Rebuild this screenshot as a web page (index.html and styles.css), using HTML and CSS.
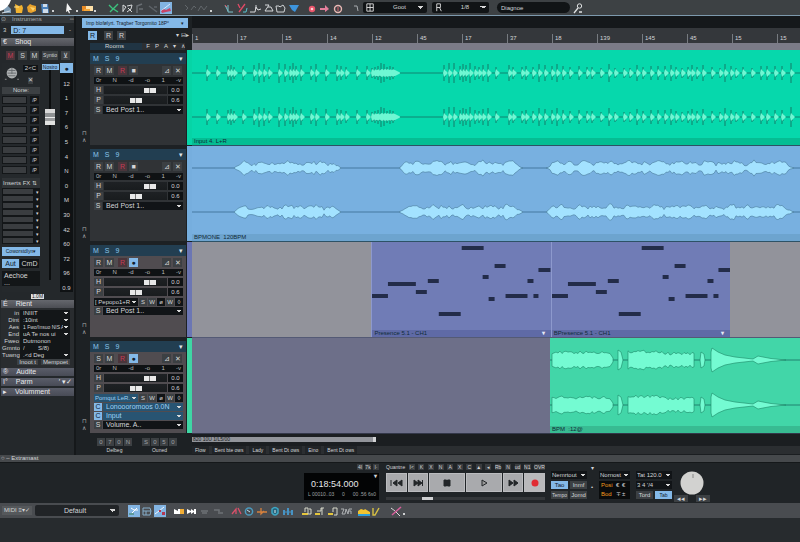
FILE: index.html
```html
<!DOCTYPE html>
<html lang="en">
<head>
<meta charset="utf-8">
<title>Arranger</title>
<link rel="stylesheet" href="styles.css">
</head>
<body>
<svg class="corner" viewBox="0 0 12 12" aria-hidden="true"><path d="M0 0H11Q8 9 0 11Z" fill="#fff"/></svg>

<header class="toolbar top">
  <div class="group">
    <button class="ico" aria-label="Home"><svg viewBox="0 0 12 12"><path d="M4 6l3-3 4 4v4H4z" fill="#7f9cb4"/><path d="M2 11L10 9" stroke="#d5dde4"/></svg></button>
    <button class="ico" aria-label="New"><svg viewBox="0 0 12 12"><path d="M2 2l4 2 3-1 1 3-1 5H3z" fill="#f2b330"/><path d="M1 5h5" stroke="#fbe08b"/></svg></button>
    <button class="ico" aria-label="Open"><svg viewBox="0 0 12 12"><path d="M1 5l3-3 2 1 4 1v5l-5 2-3-1z" fill="#e8a22c"/><path d="M4 5l5 1-2 3z" fill="#ffd56d"/></svg></button>
    <button class="ico" aria-label="Save"><svg viewBox="0 0 12 12"><path d="M2 2h7l1 9H3z" fill="#4c83bd"/><path d="M4 2h4v3H4zM4 7h5v4H4z" fill="#cfdce9"/></svg></button>
    <i class="dot"></i>
  </div>
  <div class="group g-arrow">
    <button class="ico" aria-label="Select"><svg viewBox="0 0 12 12"><path d="M4 1l5 7-3 0 1 3-1 .6L4.800 9 3 10z" fill="#f4f4f4"/></svg></button>
    <i class="dot"></i>
    <button class="ico" aria-label="Erase"><svg viewBox="0 0 12 12"><path d="M1 4h4v5H1z" fill="#e98a24"/><path d="M5 4h7v5H5z" fill="#ffe1a8"/><path d="M3 7h6v2H3z" fill="#f6a83a"/></svg></button>
    <i class="dot"></i>
  </div>
  <div class="group g-edit">
    <button class="ico" aria-label="Split"><svg viewBox="0 0 12 12"><path d="M1 3l3 3 6 4M2 10l8-8" stroke="#3cc27d" stroke-width="1.400" fill="none"/></svg></button>
    <button class="ico" aria-label="Range"><svg viewBox="0 0 12 12"><path d="M2 3v7M2 3l3 2-3 4M6 4l5-1-1 4-4 3M7 6l4 4" stroke="#d8dadb" fill="none"/></svg></button>
    <button class="ico" aria-label="Bend"><svg viewBox="0 0 12 12"><path d="M3 11V4l5-2M5 7h4" stroke="#686d72" stroke-width="1.500" fill="none"/></svg></button>
    <button class="ico" aria-label="Mute"><svg viewBox="0 0 12 12"><path d="M2 4l4 3 4 3M7 5h3" stroke="#5e6368" stroke-width="1.500" fill="none"/></svg></button>
    <button class="ico on" aria-label="Paint"><svg viewBox="0 0 12 12"><path d="M1 9l9-7" stroke="#d7eaff"/><path d="M1 9q3-3 5-1l4-2 1 3-5 1-4 1z" fill="#c84468"/></svg></button>
  </div>
  <div class="group g-dim">
    <button class="ico" aria-label="Undo"><svg viewBox="0 0 12 12"><path d="M1 3l3 3-2 2M7 8l3-4 2 2" stroke="#62676b" fill="none"/></svg></button>
    <button class="ico" aria-label="Redo"><svg viewBox="0 0 12 12"><path d="M1 9l3-5 3 4 3-4" stroke="#62676b" fill="none"/></svg></button>
    <i class="dot"></i>
  </div>
  <div class="group g-tools">
    <button class="ico" aria-label="Tempo"><svg viewBox="0 0 12 12"><path d="M2 3l3 6M5 3v7h5" stroke="#7cc3cc" fill="none"/><path d="M2 3l2 2" stroke="#d45060"/></svg></button>
    <button class="ico" aria-label="Transpose"><svg viewBox="0 0 12 12"><path d="M2 2l2 4M3 10l6-8" stroke="#e04a66" stroke-width="1.300"/><path d="M7 10h3l1-4" stroke="#59c2cf" fill="none"/></svg></button>
    <button class="ico" aria-label="Quantize"><svg viewBox="0 0 12 12"><path d="M1 10h5l1-5 2 3 3-1M7 3v4" stroke="#d6d8da" fill="none"/></svg></button>
    <button class="ico" aria-label="Groove"><svg viewBox="0 0 12 12"><path d="M3 3h4L3 9h8l-2-4h-3" stroke="#d6d8da" fill="none"/></svg></button>
    <button class="ico" aria-label="Folder"><svg viewBox="0 0 12 12"><path d="M1 4h3l1 1 3-2 2 3-1 4H2z" stroke="#cfd2d4" fill="none"/></svg></button>
    <button class="ico" aria-label="Marker"><svg viewBox="0 0 12 12"><path d="M1 3h10L7 10 4 8z" fill="#3d94dc"/></svg></button>
  </div>
  <div class="group g-rec">
    <button class="ico" aria-label="Record mode"><svg viewBox="0 0 12 12"><circle cx="6" cy="7" r="3.200" fill="#e8566c"/><circle cx="6" cy="7" r="1.300" fill="#ffd0d4"/></svg></button>
    <button class="ico" aria-label="Punch"><svg viewBox="0 0 12 12"><path d="M1 6h5V3l4 4-4 3V8H1z" fill="#e57f9c"/></svg></button>
    <button class="ico" aria-label="Metronome"><svg viewBox="0 0 12 12"><circle cx="6" cy="7" r="3.500" fill="none" stroke="#e9b8b4" stroke-width="1.400"/><path d="M6 5v4" stroke="#e0606a"/></svg></button>
  </div>
  <div class="group g-hook">
    <button class="ico" aria-label="Snap"><svg viewBox="0 0 12 12"><path d="M4 4h3l1 5" stroke="#a6aaad" fill="none"/></svg></button>
  </div>
  <label class="drop grid-mode"><svg viewBox="0 0 12 12"><path d="M2 2h7v8H2zM5.500 2v8M2 6h7" stroke="#ddd" fill="none"/></svg><select aria-label="Grid"><option>Goot</option></select></label>
  <label class="drop beat-mode"><svg viewBox="0 0 12 12"><path d="M3 10V2h4v4H3M6 6l2 4" stroke="#ddd" fill="none"/></svg><select aria-label="Beat"><option>1/8</option></select></label>
  <input class="search" type="text" aria-label="Search" value="Diagnoe">
  <button class="ico wand" aria-label="Tool"><svg viewBox="0 0 12 12"><circle cx="7.500" cy="4" r="2.200" fill="none" stroke="#dfe1e2"/><path d="M6 6l-4 5M7 10h3" stroke="#dfe1e2" stroke-width="1.300"/></svg></button>
</header>

<main class="work">
  <aside class="side">
    <div class="side-title"><span>⊙</span><span>Instrumens</span><span class="end">▫▫</span></div>
    <div class="inst"><span>3</span><input type="text" aria-label="Instrument" value="D: 7"><span>-</span></div>
    <h2 class="bar">€ <span>Shoq</span></h2>
    <div class="chan-btns">
      <button class="b rec">M</button><button class="b">S</button><button class="b">M</button><button class="b wide">Syntio</button><button class="b">⊻</button>
    </div>
    <div class="channel">
      <div class="rack">
        <div class="pan">
          <svg class="knob" viewBox="0 0 18 18" role="img" aria-label="Pan"><circle cx="9" cy="8" r="6" fill="#aeb1b2"/><path d="M5 5h8M4 8h10M5 11h8M9 2v7" stroke="#63686b"/><path d="M1 15h2M15 15h2" stroke="#999"/></svg>
          <div class="pan-info"><span class="val">2&lt;C</span><span class="sq">✕</span></div>
        </div>
        <button class="send">None:</button>
        <div class="slots" id="sends"></div>
        <h3 class="fx">Inserts FX ⇅</h3>
        <div class="inserts" id="inserts"></div>
        <button class="b blue comp">Coworstdlyn▾</button>
        <div class="two"><button class="b blue">Aut</button><button class="b black">CmD</button></div>
        <div class="note">Aechoe<br>...</div>
      </div>
      <div class="fader">
        <button class="b blue tiny">Nosiro</button>
        <input type="range" class="vfader" aria-label="Channel level" min="0" max="100" value="80">
      </div>
      <div class="meter">
        <button class="b blue mono">●</button>
        <span>12</span><span>1</span><span>7</span><span>6</span><span>5</span><span>4</span><span>N</span><span>0</span><span>M</span><span>30</span><span>42</span><span>60</span><span>72</span><span>96</span><span>0.9</span>
      </div>
    </div>
    <div class="badge-row"><span>1.0M</span></div>
    <h2 class="bar">É <span>Rient</span></h2>
    <div class="form">
      <label>in<select><option>INIIIT</option></select></label>
      <label>Dint<select><option>:10int</option></select></label>
      <label>Aes<select><option>1 Fwo/Insuo NIS A</option></select></label>
      <label>End<select><option>uA   Te nos ui</option></select></label>
      <label>Fweo<input type="text" value="Dutmonon"></label>
      <label>Gmnto<input type="text" value="/        S/8)"></label>
      <label>Tuwng<select><option>.&lt;d   Deg</option></select></label>
      <div class="form-btns"><button class="b">Inoot t</button><button class="b">Mempoet</button></div>
    </div>
    <h2 class="bar alt">® <span>Audite</span></h2>
    <h2 class="bar alt">I° <span>Parm</span><span class="end">′ ▾✓</span></h2>
    <h2 class="bar alt">▸ <span>Volumment</span></h2>
  </aside>

  <section class="arranger">
    <div class="list-head">
      <button class="tab"><span>Imp blofølyrt. Tragber Torgomito 18P°</span><span>▾</span></button>
      <div class="modes"><button class="b blue">R</button><button class="b">R</button><button class="b">R</button><span class="end">▾ ⊟▸</span></div>
      <div class="rooms"><span>Rooms</span><span class="marks"><i>F</i><i>P</i><i>A</i><i>▾</i><i>∧</i></span></div>
    </div>
    <div class="time-head">
      <div class="ruler" id="ruler"></div>
      <div class="strip"></div>
    </div>

    <div class="tracks" id="tracks"></div>

    <div class="lanes">
      <div class="lane"><div class="clip green full"><svg class="wave" id="wave-input" viewBox="0 0 608 88" preserveAspectRatio="none"></svg><span class="name">Input 4. L+R</span></div></div>
      <div class="lane"><div class="clip sky full"><svg class="wave" id="wave-bpm" viewBox="0 0 608 88" preserveAspectRatio="none"></svg><span class="name">BPMONE&nbsp; 120BPM</span></div></div>
      <div class="lane gray">
        <div class="space s180"></div>
        <div class="clip midi"><svg class="wave notes" viewBox="0 0 179 88" preserveAspectRatio="none"></svg><span class="name">Presence 5.1 - CH1<b>▾</b></span></div>
        <div class="clip midi"><svg class="wave notes" viewBox="0 0 179 88" preserveAspectRatio="none"></svg><span class="name">BPresence 5.1 - CH1<b>▾</b></span></div>
        <div class="space s70"></div>
      </div>
      <div class="lane slate">
        <div class="space s358"></div>
        <div class="clip mint"><svg class="wave" id="wave-mint" viewBox="0 0 250 88" preserveAspectRatio="none"></svg><span class="name">BPM&nbsp; :12@</span></div>
      </div>
    </div>

    <div class="list-foot">
      <div><div class="keys"><button>0</button><button>7</button><button>0</button><button>N</button></div><span>Delbeg</span></div>
      <div><div class="keys"><button>S</button><button>0</button><button>5</button><button>0</button></div><span>Ouned</span></div>
    </div>
    <div class="time-foot">
      <div class="hscroll"><span>820 10U 1/L5/00</span></div>
      <div class="pads"><button>Flow</button><button>Bent bte ows</button><button>Lady</button><button>Bent Dt ows</button><button>Eino</button><button>Bent Dt ows</button></div>
    </div>
  </section>
</main>

<div class="status">○ – Extramast</div>

<section class="transport">
  <div class="clock-col">
    <div class="minis"><button>4I</button><button>7k</button><button>I·</button></div>
    <div class="clock"><b>▾</b><strong>0:18:54.000</strong><span><i>L 00010..03</i><i>0</i><i>00 .56 6s0</i></span></div>
  </div>
  <div class="play-col">
    <div class="minis spread"><span>Quantne</span><button>I&lt;</button><button>K</button><button>X</button><button>N</button><button>A</button><button>X</button><button>C</button><button>▲</button><button>◂</button><button>Rb</button><button>N</button><button>ud</button><button>N1</button><button>OVR</button></div>
    <div class="play">
      <button aria-label="Start"><svg viewBox="0 0 14 10"><path d="M2 2v6M8 2L4 5l4 3zM13 2L9 5l4 3z"/></svg></button>
      <button aria-label="Rewind"><svg viewBox="0 0 14 10"><path d="M3 2l4 3-4 3zM7 2l4 3-4 3z"/><path d="M11.500 2v6"/></svg></button>
      <button class="big" aria-label="Stop"><svg viewBox="0 0 14 10"><path d="M4 2h2.500v6H4zM7.500 2H10v6H7.500z"/></svg></button>
      <button class="big" aria-label="Play"><svg viewBox="0 0 14 10"><path d="M5 2l5 3-5 3z" fill="#999"/></svg></button>
      <button aria-label="Forward"><svg viewBox="0 0 14 10"><path d="M3 2l4 3-4 3zM8 2l4 3-4 3z"/></svg></button>
      <button aria-label="Record"><svg viewBox="0 0 14 10"><circle cx="7" cy="5" r="3.500" fill="#e02b32" stroke="none"/></svg></button>
    </div>
    <input class="locate" type="range" aria-label="Position" min="0" max="100" value="24">
  </div>
  <div class="opts">
    <select class="span2" aria-label="Input mode"><option>Nemrtout</option></select>
    <button class="b blue">Tao</button><button class="b">Inmf</button>
    <button class="b">Tempo</button><button class="b">Jomd</button>
  </div>
  <div class="arrows"><span>▾</span><span>•</span></div>
  <div class="opts one">
    <select aria-label="Mode"><option>Nornost</option></select>
    <div class="loc"><b>Posi</b><i>€</i><i>€</i><b>Bod</b><i>∓</i><i>±</i></div>
  </div>
  <div class="opts">
    <select class="span2" aria-label="Tempo"><option>Tat 120.0</option></select>
    <select class="span2" aria-label="Signature"><option>3   4 '/4</option></select>
    <button class="b">Tord</button><button class="b blue">Tab</button>
  </div>
  <div class="jog">
    <svg viewBox="0 0 24 24" role="img" aria-label="Jog wheel"><circle cx="12" cy="12" r="11.500" fill="#d2d2d0"/><path d="M13 3v4" stroke="#888"/></svg>
    <div><button class="b">◂◂</button><button class="b">▸▸</button></div>
  </div>
</section>

<footer class="toolbar bottom">
  <button class="b midi-btn">MIDI ≡▾✓</button>
  <label class="drop preset"><select aria-label="Preset"><option>Default</option></select></label>
  <div class="group">
    <button class="ico on" aria-label="Draw"><svg viewBox="0 0 12 12"><path d="M2 10l7-7M3 3l3 2h4" stroke="#fff" fill="none"/><path d="M1 8h5v2H1z" fill="#5d9a9a"/></svg></button>
    <button class="ico" aria-label="Pattern"><svg viewBox="0 0 12 12"><path d="M2 3h7l1 3-1 4H2zM2 6h8M5 6v4" stroke="#86aecb" fill="none"/></svg></button>
    <button class="ico on" aria-label="Curve"><svg viewBox="0 0 12 12"><path d="M1 9l4-3 5-4" stroke="#f3f8ff" fill="none"/><path d="M5 5h2v2H5zM8 7h3v3H8z" fill="#b43752"/></svg></button>
  </div>
  <div class="group g-b2">
    <button class="ico" aria-label="Join"><svg viewBox="0 0 12 12"><path d="M1 4l4 2V4h2v5H1z" fill="#fff"/><path d="M7 4h4v5H7z" fill="#f2ae36"/></svg></button>
    <button class="ico" aria-label="Trim"><svg viewBox="0 0 12 12"><path d="M1 4l4 2V4l3 2V4h2v5H8V7L5 9V7L1 9z" fill="#fff"/></svg></button>
    <button class="ico" aria-label="Fade"><svg viewBox="0 0 12 12"><path d="M2 6h7M3 8h5" stroke="#6d7175" stroke-width="1.500"/></svg></button>
    <button class="ico" aria-label="Glue"><svg viewBox="0 0 12 12"><path d="M2 5h5v4M8 8h3" stroke="#6d7175" stroke-width="1.500" fill="none"/></svg></button>
  </div>
  <div class="group g-b3">
    <button class="ico" aria-label="Slice"><svg viewBox="0 0 12 12"><path d="M2 9l4-5v5M8 3l3 6" stroke="#d9506a" stroke-width="1.300" fill="none"/></svg></button>
    <button class="ico" aria-label="Loop"><svg viewBox="0 0 12 12"><circle cx="6" cy="6.500" r="3.600" stroke="#4b9cc0" stroke-width="1.500" fill="none"/><path d="M4 5l3 2" stroke="#b9dfef"/></svg></button>
    <button class="ico" aria-label="Stretch"><svg viewBox="0 0 12 12"><path d="M1 7h10M5 3v6l3-3" stroke="#d6803c" stroke-width="1.300" fill="none"/></svg></button>
    <button class="ico" aria-label="Listen"><svg viewBox="0 0 12 12"><path d="M3 4q3-3 6 0v4q-3 4-6 0z" stroke="#3ea7c4" stroke-width="1.500" fill="#27627a"/><path d="M6 5v3" stroke="#d9eef4"/></svg></button>
    <button class="ico" aria-label="Align"><svg viewBox="0 0 12 12"><path d="M1 5h2v5H1zM5 3h2v7H5zM9 5h2v5H9z" fill="#4793c4"/><path d="M3 7h6" stroke="#4793c4"/></svg></button>
  </div>
  <div class="group g-b4">
    <button class="ico" aria-label="Note A"><svg viewBox="0 0 12 12"><path d="M1 9h6" stroke="#e5c63c" stroke-width="2"/><path d="M4 7V3h3v6h3V4H8" stroke="#d7d8ca" fill="none"/></svg></button>
    <button class="ico" aria-label="Note B"><svg viewBox="0 0 12 12"><path d="M1 9h5" stroke="#e5c63c" stroke-width="2"/><path d="M3 6h4V3h3M8 3v7" stroke="#d7d8ca" fill="none"/></svg></button>
    <button class="ico" aria-label="Note C"><svg viewBox="0 0 12 12"><path d="M1 9h5" stroke="#e5c63c" stroke-width="2"/><path d="M6 7V3h4v7H7" stroke="#d7d8ca" fill="none"/></svg></button>
    <button class="ico" aria-label="Note D"><svg viewBox="0 0 12 12"><path d="M1 4h3L2 9h3l1-5 2 5 1-5h3M9 6h2v3" stroke="#aeb1b3" fill="none"/></svg></button>
  </div>
  <div class="group g-b5">
    <button class="ico" aria-label="Terrain"><svg viewBox="0 0 12 12"><path d="M0 9V6l3-2 3 1 1-1 5 3v2z" fill="#f0c331"/><path d="M0 10h12" stroke="#2d9edb" stroke-width="2"/></svg></button>
    <button class="ico" aria-label="Velocity"><svg viewBox="0 0 12 12"><path d="M2 3v7h2l4-7" stroke="#d7c043" stroke-width="1.400" fill="none"/></svg></button>
  </div>
  <div class="group g-b6">
    <button class="ico" aria-label="Cut"><svg viewBox="0 0 12 12"><path d="M1 3l4 3 5 5" stroke="#ddd"/><path d="M2 10l9-8" stroke="#d65f9b" stroke-width="1.500"/></svg></button>
    <i class="dot"></i>
  </div>
</footer>
<div class="floor"></div>
<script src="app.js"></script>
</body>
</html>
```
FILE: styles.css
```css
* { box-sizing: border-box; }
body {
  margin: 0;
  min-height: 100vh;
  display: flex;
  flex-direction: column;
  background: #1d2124;
  color: #d3d5d7;
  font: 6px/7px "Liberation Sans", Arial, sans-serif;
  overflow: hidden;
}
button, input, select {
  font: inherit;
  color: inherit;
  margin: 0;
  padding: 0;
  border: 0;
  border-radius: 0;
  background: none;
  appearance: none;
  min-width: 0;
}
h2, h3 { margin: 0; font-weight: normal; }
i, em { font-style: normal; }
.end { margin-left: auto; }
select {
  background-color: #111417;
  background-image: linear-gradient(45deg, transparent 50%, #d8d8d8 50%), linear-gradient(-45deg, transparent 50%, #d8d8d8 50%);
  background-size: 2px 3px;
  background-position: right 4px center, right 2px center;
  background-repeat: no-repeat;
  padding: 0 7px 0 3px;
}
.corner { position: absolute; z-index: 1; left: 0; top: 0; width: 12px; height: 12px; }

/* toolbars */
.toolbar { display: flex; align-items: center; background: #404447; }
.top { height: 16px; border-bottom: 1px solid #7d99ad; background: #3d4144; }
.group { display: flex; align-items: center; gap: 1px; }
.ico { width: 12px; height: 12px; flex: none; }
.ico svg { display: block; width: 12px; height: 12px; }
.ico.on { background: #82b4e2; }
.dot { width: 4px; height: 8px; flex: none; display: flex; align-items: end; }
.dot::after { content: ""; width: 2px; height: 2px; background: #cfd1d2; }
.g-arrow { margin-left: 7px; }
.g-edit { margin-left: 10px; }
.g-dim { margin-left: 12px; }
.g-tools { margin-left: 9px; }
.g-rec, .g-hook { margin-left: 6px; }
.drop { display: flex; align-items: center; background: #111416; border-radius: 2px; height: 11px; }
.drop svg { width: 11px; height: 11px; flex: none; margin-left: 2px; }
.drop select { flex: 1; height: 11px; background-color: transparent; text-align: center; background-size: 3px 3px; background-position: right 6px center, right 3px center; }
.grid-mode { width: 64px; margin-left: 1px; }
.beat-mode { width: 57px; margin-left: 5px; }
.search { width: 73px; height: 11px; margin-left: 8px; padding: 0 4px; border-radius: 6px; background: #111416; font-size: 6px; }
.wand { margin-left: 2px; }

/* layout */
.work { display: flex; }
.side { width: 76px; flex: none; padding-left: 1px; border-right: 2px solid #15181a; background: #24282b; }
.arranger {
  flex: 1;
  min-width: 0;
  margin-left: 6px;
  display: grid;
  grid-template-columns: 110px minmax(0, 1fr);
  grid-template-rows: 34px auto 21px;
}

/* shared buttons */
.b { background: #3c4043; height: 9px; min-width: 9px; font-size: 7px; line-height: 9px; text-align: center; white-space: nowrap; }
.b.blue { background: #84b9e8; color: #12202c; }
.b.black { background: #111416; }
.b.rec { color: #c33b55; background: #4a353b; }

/* side panel */
.side-title { display: flex; gap: 6px; height: 7px; background: #33373a; color: #a9acae; }
.inst { display: flex; align-items: center; gap: 5px; margin: 3px 3px 4px 2px; }
.inst input { flex: 1; height: 8px; background: #84b9e8; color: #12202c; padding-left: 2px; font-size: 7px; }
.bar { display: flex; gap: 8px; height: 8px; padding: 0 2px; font-size: 7px; line-height: 8px; background: linear-gradient(#65676d, #4b4d53); color: #e8e8ea; }
.bar.alt { background: linear-gradient(#5a5d69, #484b56); margin-bottom: 2px; }
.chan-btns { display: flex; gap: 3px; margin: 5px 5px 3px; }
.chan-btns .b { flex: 1; }
.chan-btns .wide { flex: 1 0 16px; font-size: 5px; }
.channel { display: grid; grid-template-columns: 38px 18px 13px; gap: 1px; padding-left: 1px; }
.rack { display: flex; flex-direction: column; background: #25292c; }
.pan { display: flex; height: 24px; padding: 2px 2px 0; gap: 3px; }
.knob { width: 18px; height: 18px; }
.pan-info { display: flex; flex-direction: column; gap: 5px; align-items: center; }
.val { background: #111416; padding: 0 2px; }
.sq { background: #3c4043; }
.send { height: 7px; background: #3c4043; margin-bottom: 2px; }
.slots { display: grid; gap: 2px; margin-bottom: 4px; }
.slot { display: grid; grid-template-columns: 25px 9px; gap: 3px; height: 8px; }
.slot button:first-child, .ins button:first-child { background: #3a3d40; border: 1px solid #131618; }
.slot button:last-child, .ins button:last-child { background: #131618; font-size: 5px; line-height: 6px; }
.fx { height: 10px; font-size: 6px; line-height: 10px; white-space: nowrap; background: #2f3336; padding-left: 1px; }
.ins { display: grid; grid-template-columns: 1fr 6px; height: 7px; }
.comp { margin-top: 3px; font-size: 5px; }
.two { display: grid; grid-template-columns: 17px 19px; gap: 1px; margin: 3px 0; }
.note { height: 15px; padding: 1px 2px; background: #131618; font-size: 7px; }
.fader { display: flex; flex-direction: column; align-items: center; }
.tiny { width: 17px; height: 6px; font-size: 5px; line-height: 6px; margin-top: 1px; }
.vfader { writing-mode: vertical-lr; direction: rtl; width: 12px; height: 210px; background: linear-gradient(90deg, transparent 5px, #0b0d0e 5px, #0b0d0e 7px, transparent 7px); }
.vfader::-webkit-slider-thumb { appearance: none; width: 10px; height: 16px; background: linear-gradient(#d9d9d9 0 4px, #8f9294 4px 8px, #eee 8px 9px, #9b9d9f 9px 12px, #e2e2e2 12px); }
.meter { display: flex; flex-direction: column; justify-content: space-between; background: #0f1214; text-align: center; height: 229px; }
.mono { height: 10px; width: 13px; }
.badge-row { display: flex; justify-content: center; height: 8px; padding: 2px 0 0; }
.badge-row span { background: #dfe0e1; color: #222; height: 5px; line-height: 5px; font-size: 5px; padding: 0 1px; }
.form { padding: 2px 4px 3px 1px; background: #292c2f; }
.form label { display: grid; grid-template-columns: 17px 1fr; gap: 1px; height: 7px; text-align: right; white-space: nowrap; }
.form select, .form input { background-color: #131618; padding-left: 3px; white-space: pre; border-bottom: 1px solid #33373a; }
.form label:nth-child(3) select { font-size: 5px; }
.form-btns { display: flex; justify-content: end; gap: 3px; }
.form-btns .b { height: 6px; font-size: 6px; line-height: 6px; padding: 0 2px; }

/* track list */
.list-head { padding: 2px 3px 0 0; }
.tab { display: flex; justify-content: space-between; width: 106px; height: 10px; padding: 0 4px; align-items: center; background: #84b9e8; color: #16222c; white-space: nowrap; font-size: 5px; }
.modes { display: flex; gap: 4px; align-items: center; margin: 3px 0 3px 6px; }
.modes .b:first-child { margin-right: 3px; }
.rooms { display: flex; justify-content: space-between; height: 7px; margin: 0 4px 0 8px; padding-left: 15px; background: linear-gradient(90deg, #203443 55%, #2c2f32 55%); }
.marks { display: flex; gap: 5px; }
.track { display: grid; grid-template-columns: 8px 1fr 5px; height: 96px; }
.gut { display: flex; flex-direction: column; justify-content: end; padding-bottom: 2px; color: #aaadaf; }
.panel { display: flex; flex-direction: column; gap: 2px; margin: 3px 1px 1px 0; background: #303336; }
.panel.warm { background: #504c50; }
.thead { display: flex; gap: 6px; align-items: center; height: 11px; padding: 0 3px; background: #223e51; color: #8cc7ec; font-size: 7px; }
.thead .end { color: #e0e6ea; }
.row { display: grid; gap: 1px; height: 8px; margin: 0 3px 0 4px; }
.row .b { height: 8px; line-height: 8px; min-width: 0; }
.btns { display: flex; gap: 2px; height: 9px; margin: 0 4px; }
.btns .rec { margin-left: 2px; }
.btns .end { margin-left: auto; }
.scale { display: flex; justify-content: space-between; height: 7px; margin: 0 3px 0 4px; padding: 0 2px; background: #0f1214; color: #b7babc; }
.level { grid-template-columns: 9px 1fr 15px; }
.level output { background: #0f1214; text-align: center; line-height: 8px; }
.level input { width: 100%; height: 8px; background: linear-gradient(#1e2124, #191c1e); }
.level input::-webkit-slider-thumb { appearance: none; width: 12px; height: 5px; background: linear-gradient(90deg, #e8e8e8 5px, #777 5px 6px, #e8e8e8 6px); }
.rows { display: grid; gap: 1px; }
.pick { grid-template-columns: 8px 1fr; }
.pick select { font-size: 7px; height: 8px; line-height: 8px; padding-left: 3px; }
.pick.lit select, .route.lit select { background-color: #285472; color: #9fd2f5; }
.pick.lit .b { background: #84b9e8; color: #123; }
.route { grid-template-columns: 1fr 8px 8px 8px 8px 8px; }
.route select { font-size: 6px; padding-left: 1px; }
.route .b { font-size: 6px; }
.stripe { margin-bottom: 1px; }
.c-green { background: #06d4a6; }
.c-sky { background: #76aede; }
.c-midi { background: #6b76b4; }
.c-mint { background: #3fd6a4; }

/* timeline */
.time-head { display: flex; flex-direction: column; justify-content: end; background: #15181b; }
.ruler { display: flex; height: 15px; padding-top: 6px; background: #34373b; overflow: hidden; }
.ruler span { flex: 0 0 45px; padding-left: 2px; height: 9px; border-left: 1px solid #777b80; font-size: 6px; line-height: 9px; }
.ruler span:last-child { flex: 1 1 0; }
.strip { height: 7px; background: #7c7c88; }
.lanes { min-width: 0; }
.lane { display: flex; height: 96px; border-bottom: 1px solid #2d5266; }
.lane.gray { background: #92939b; border-color: #545a75; }
.lane.slate { background: #6d6f89; border-color: #34384a; }
.clip { display: flex; flex-direction: column; justify-content: end; min-width: 0; }
.full { flex: 1; }
.s180 { flex: 180; }
.midi { flex: 179; border-left: 1px solid #8d99cd; }
.s70 { flex: 70; }
.s358 { flex: 358; }
.mint { flex: 250; }
.wave { display: block; width: 100%; flex: 1; min-height: 0; }
.name { display: flex; justify-content: space-between; height: 7px; padding: 0 6px 0 2px; color: #102a38; white-space: nowrap; }
.name b { color: #e6e9f5; }
.clip.green { background: #06d8ac; }
.green .name { background: #05bd93; }
.clip.sky { background: #78b0e0; }
.sky .name { background: #6da4cf; }
.clip.midi { background: #707cb6; }
.midi .name { background: #5f6aa6; }
.clip.mint { background: #42d6a8; }
.mint .name { background: #38bb92; }
.line { stroke: #17695f; stroke-width: 1; fill: none; opacity: .75; }
.spike { stroke: #127d68; stroke-width: 1; fill: none; }
.body { fill: #6ff7d3; }
.sky .line { stroke: #33658b; }
.sky .body { fill: #a3e2ff; stroke: #47799a; stroke-width: 1; stroke-opacity: .6; }
.mint .body { fill: #74fbd2; stroke: #1c8868; stroke-width: 1; stroke-opacity: .6; }
.note-bar { fill: #232c49; }

/* below the timeline */
.list-foot { display: flex; gap: 10px; padding: 4px 0 0 15px; text-align: center; }
.keys { display: grid; grid-template-columns: repeat(4, 8px); gap: 1px; margin-bottom: 1px; }
.keys button { height: 8px; background: #3c4043; color: #9ea1a3; }
.list-foot span { font-size: 5px; }
.time-foot { padding-top: 3px; background: #1b1e21; }
.hscroll { width: 184px; max-width: 100%; height: 5px; line-height: 5px; padding-left: 1px; background: #92949a; color: #191c1e; font-size: 5px; border-right: 3px solid #d2d3d5; }
.pads { display: flex; gap: 3px; height: 8px; margin-top: 4px; background: #2b2e31; font-size: 5px; }
.pads button { padding: 0 3px; background: #212427; }

/* transport */
.status { height: 7px; padding-left: 1px; background: #46494c; font-size: 6px; }
.transport { display: flex; height: 41px; padding: 1px 0 0 304px; background: #202427; border-top: 1px solid #15181a; }
.minis { display: flex; justify-content: end; gap: 2px; height: 6px; line-height: 6px; margin-bottom: 3px; font-size: 5px; }
.minis button { min-width: 6px; background: #393c3f; }
.spread { justify-content: space-between; gap: 0; }
.clock-col { width: 75px; }
.clock { position: relative; height: 27px; padding: 5px 3px 0 4px; background: #030405; }
.clock strong { display: block; font-size: 9px; line-height: 12px; font-weight: normal; color: #e6e8ea; padding-left: 3px; }
.clock span { display: flex; justify-content: space-between; font-size: 5px; line-height: 8px; color: #9fa2a4; }
.clock b { position: absolute; right: 2px; top: 0; }
.play-col { width: 159px; margin-left: 7px; }
.play { display: flex; gap: 1px; }
.play button { flex: 20; height: 19px; background: #a9aaad; border: 1px solid #bbbcbf; }
.play .big { flex: 36; }
.play svg { display: block; width: 14px; height: 10px; margin: auto; fill: #232629; stroke: #232629; stroke-width: 1; }
.play button:last-child { background: #b9b9bb; }
.locate { display: block; width: 100%; height: 3px; margin-top: 5px; background: #34373a; }
.locate::-webkit-slider-thumb { appearance: none; width: 11px; height: 3px; background: #cfd0d2; }
.opts { display: grid; grid-template-columns: 17px 17px; grid-auto-rows: 8px; gap: 2px; margin: 7px 0 0 6px; align-content: start; }
.opts select { font-size: 6px; padding-left: 1px; }
.opts .b { height: 8px; line-height: 8px; font-size: 6px; min-width: 0; }
.opts .b:nth-child(4) { font-size: 5px; }
.span2 { grid-column: span 2; }
.opts.one { grid-template-columns: 31px; margin-left: 2px; }
.arrows { display: flex; flex-direction: column; gap: 12px; width: 10px; padding-top: 1px; text-align: center; }
.loc { display: grid; grid-template-columns: 15px 6px 6px; grid-row: span 2; background: #090b0c; padding: 0 2px; line-height: 9px; }
.loc b { color: #f29b1d; font-weight: normal; font-size: 6px; }
.jog { width: 36px; padding-top: 7px; margin-left: 2px; }
.jog svg { display: block; width: 24px; height: 24px; margin: 0 auto; }
.jog div { display: flex; justify-content: space-between; }
.jog .b { width: 14px; height: 7px; line-height: 7px; }

/* bottom toolbar */
.bottom { height: 15px; padding-left: 2px; background: #494c50; }
.midi-btn { width: 30px; background: #55585b; font-size: 6px; }
.preset { width: 84px; margin: 0 9px 0 3px; background: #212427; font-size: 7px; }
.g-b2 { margin-left: 7px; }
.g-b3 { margin-left: 6px; }
.g-b4 { margin-left: 7px; }
.g-b5 { margin-left: 6px; }
.g-b6 { margin-left: 7px; }
.floor { flex: 1; background: #272b2e; }
```
FILE: app.js
```js
const $ = (id) => document.getElementById(id);

// Channel rack
$("sends").innerHTML = Array(8).fill('<div class="slot"><button aria-label="Send"></button><button>/P</button></div>').join("");
$("inserts").innerHTML = Array(8).fill('<div class="ins"><button aria-label="Insert"></button><button>▾</button></div>').join("");

// Ruler
$("ruler").innerHTML = ["1", "17", "15", "14", "12", "45", "17", "37", "18", "139", "145", "45", "15", "15"]
  .map((n) => `<span>${n}</span>`).join("");

// Track list
const level = (label, value, out) =>
  `<div class="row level"><button class="b">${label}</button><input type="range" aria-label="${label}" value="${value}"><output>${out}</output></div>`;
const pick = (key, name, lit) =>
  `<div class="row pick ${lit ? "lit" : ""}"><button class="b">${key}</button><select aria-label="Input"><option>${name}</option></select></div>`;
const route = (name, lit) =>
  `<div class="row route ${lit ? "lit" : ""}"><select aria-label="Route"><option>${name}</option></select><button class="b">S</button><button class="b">W</button><button class="b black">ø</button><button class="b">W</button><button class="b black">◊</button></div>`;

const tracks = [
  { color: "green", first: "R", rows: pick("S", "Bed Post 1..") },
  { color: "sky", first: "R", rows: pick("S", "Bed Post 1..") },
  { color: "midi", first: "R", warm: true, rows: route("[ Pepopo1+R") + pick("S", "Bed Post 1..") },
  { color: "mint", first: "S", warm: true, rows: route("Pomqut LeR.", true) + pick("C", "Lonoooromoos 0.0N", true) + pick("C", "Input", true) + pick("S", "Volume. A..") }
];
$("tracks").innerHTML = tracks.map((t) => `
  <div class="track">
    <div class="gut"><span>⊓</span><span>∧</span></div>
    <div class="panel ${t.warm ? "warm" : ""}">
      <div class="thead"><span>M</span><span>S</span><span>9</span><span class="end">▾</span></div>
      <div class="btns"><button class="b">${t.first}</button><button class="b">M</button><button class="b rec">R</button><button class="b ${t.warm ? "blue" : ""}">${t.warm ? "●" : "■"}</button><button class="b end">⊿</button><button class="b">✕</button></div>
      <div class="scale"><span>0r</span><span>N</span><span>-d</span><span>-o</span><span>1</span><span>-v</span></div>
      ${level("H", 79, "0.0")}${level("P", 50, "0.6")}
      <div class="rows">${t.rows}</div>
    </div>
    <div class="stripe c-${t.color}"></div>
  </div>`).join("");

// Waveforms
const noise = (i) => { const v = Math.sin(i * 12.9898) * 43758.5453; return v - Math.floor(v); };

function shape(points, cy) {
  const up = points.map(([x, a]) => `${x} ${(cy - a).toFixed(1)}`);
  const down = points.slice().reverse().map(([x, a]) => `${x} ${(cy + a).toFixed(1)}`);
  return `<path class="body" d="M${up.concat(down).join("L")}Z"/>`;
}
const line = (w, cy) => `<path class="line" d="M0 ${cy}H${w}"/>`;

const hits = [15, 25, 36, 39, 42, 51, 62, 67, 72, 77, 87, 93, 98, 101, 104, 109, 119, 124, 134, 145, 149, 154, 165, 175];
for (let x = 180; x < 204; x += 3) hits.push(x);
hits.push(252, 257, 262, 268, 271, 274, 278, 283, 287, 291, 296, 304);
for (let x = 317, i = 0; x < 604; i++) { hits.push(x); x += 4 + Math.round(noise(i) * 5); }

$("wave-input").innerHTML = [23, 67].map((cy) => {
  let spikes = "", bodies = "";
  hits.forEach((x, i) => {
    const tall = 5 + Math.round(noise(i + 3) * 5);
    spikes += `M${x} ${cy - tall}V${cy + tall}M${x + 1} ${cy - 3}V${cy + 4}`;
    bodies += shape([[x - 1, 0], [x, 4], [x + 2, 2], [x + 4, 0]], cy);
  });
  const dense = Array.from({ length: 29 }, (_, i) => [180 + i, i > 22 ? (29 - i) / 2 : 2 + noise(i) * 2]);
  return line(608, cy) + `<path class="spike" d="${spikes}"/>` + bodies + shape(dense, cy);
}).join("");

function lobes(from, to, seed) {
  const pts = [[from, 0]];
  for (let x = from + 2; x < to - 1; x += 2) {
    const edge = Math.min(1, (x - from) / 7, (to - x) / 10);
    const swell = 0.65 + 0.35 * Math.sin(x / 3 + seed) * Math.sin(x / 13 + seed);
    pts.push([x, (5 * swell + noise(x + seed) * 3.5) * edge]);
  }
  pts.push([to, 0]);
  return pts;
}
$("wave-bpm").innerHTML = [22, 66].map((cy, k) =>
  line(608, cy) + shape(lobes(42, 149, k), cy) + shape(lobes(207, 331, k + 5), cy) + shape(lobes(354, 602, k + 9), cy)
).join("");

function block(from, to, base, vary, seed) {
  const pts = [];
  for (let x = from; x <= to; x += 2) pts.push([x, base + noise(x + seed) * vary]);
  return pts;
}
$("wave-mint").innerHTML = [22, 67].map((cy, k) =>
  line(250, cy) +
  shape([...block(2, 61, 6, 3, k), [63, 2]], cy) +
  shape([[68, 0], [68, 10], [71, 8], [73, 0]], cy) +
  shape([...block(78, 112, 7, 3, k + 2), ...block(114, 145, 5, 3, k + 4)], cy) +
  shape([[150, 0], [151, 8], [154, 6], [155, 0]], cy) +
  shape([[161, 8], [162, 12], [168, 8], [175, 5], [185, 3], [203, 1], [208, 4], [213, 3], [221, 1.5], [236, 0]], cy)
).join("");

// MIDI notes: x, width, y
const notes = [[0, 16, 54], [16, 28, 42], [44, 11, 50], [56, 11, 39], [67, 22, 72], [90, 22, 6], [111, 6, 35], [117, 6, 57], [123, 11, 24], [134, 22, 54], [156, 6, 39], [162, 5, 54], [167, 12, 28]];
document.querySelectorAll(".notes").forEach((svg) => {
  svg.innerHTML = notes.map(([x, w, y]) => `<rect class="note-bar" x="${x}" y="${y - 2}" width="${w}" height="4"/>`).join("");
});
```
